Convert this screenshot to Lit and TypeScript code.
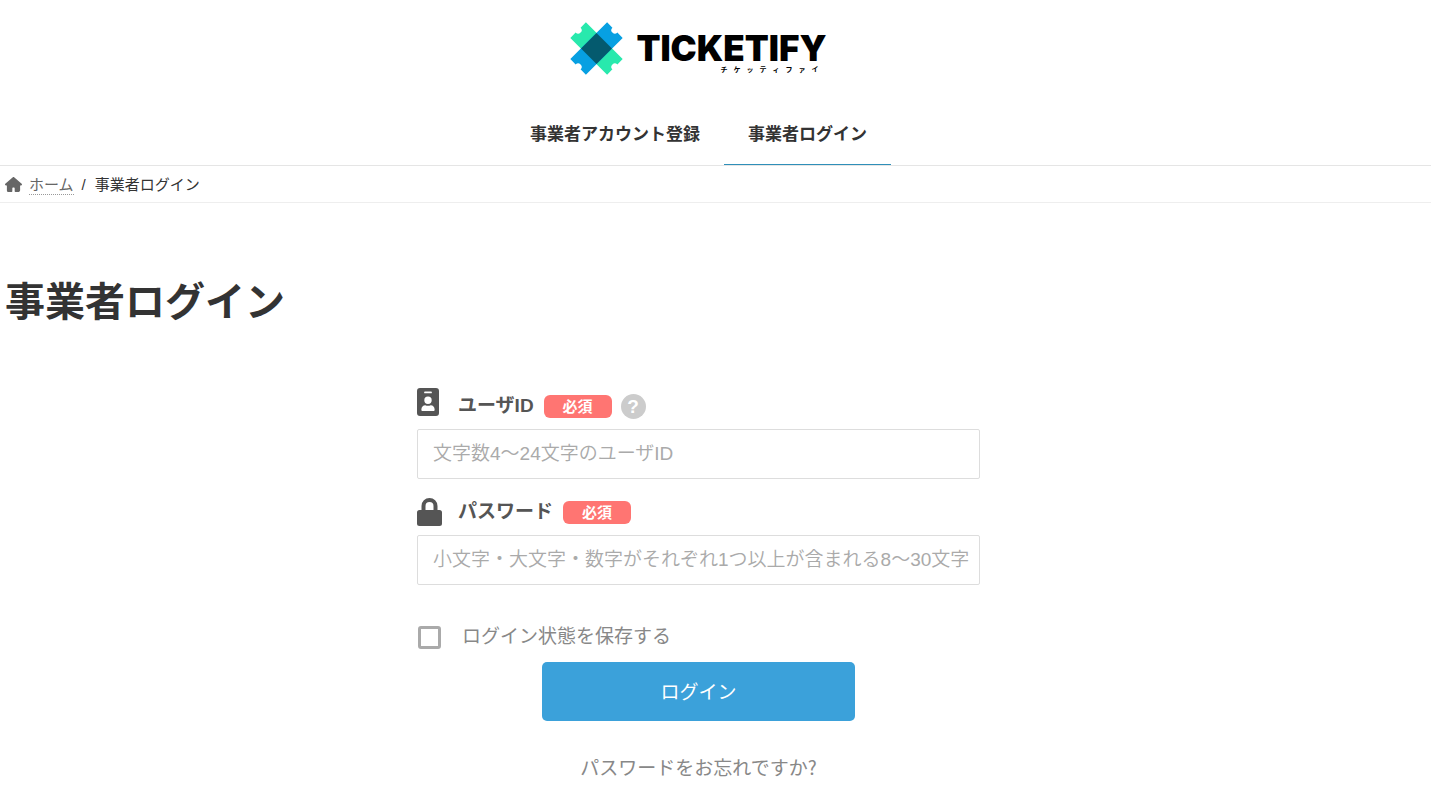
import { LitElement, html, css } from "lit";
import { customElement } from "lit/decorators.js";

@customElement("app-root")
export class AppRoot extends LitElement {
  static styles = css`
    :host {
      display: block;
      background: #fff;
      color: #333;
      font-family: "Liberation Sans", "Noto Sans CJK JP", sans-serif;
    }
    * { box-sizing: border-box; }
    a { color: inherit; text-decoration: none; }
    .inset { padding: 0 39px 0 5px; }
    .header {
      display: flex;
      flex-direction: column;
      align-items: center;
      border-bottom: 1px solid #e5e5e5;
    }
    .logo {
      display: flex;
      align-items: flex-start;
      gap: 13px;
      margin-top: 22px;
      height: 53px;
      color: #000;
    }
    .mark { display: block; width: 53px; height: 53px; }
    .wordmark { display: flex; flex-direction: column; align-items: flex-end; padding-top: 8px; }
    .name { font: 900 35px/36px Inter, sans-serif; }
    .kana {
      display: flex;
      gap: 6px;
      padding-right: 8px;
      font: 700 7px/7px "Noto Sans CJK JP", sans-serif;
    }
    .nav { display: flex; margin-top: 29px; }
    .nav a {
      padding: 2px 24px 0;
      font-size: 17px;
      font-weight: 700;
      line-height: 58px;
      border-bottom: 1px solid transparent;
    }
    .nav a.current { border-bottom-color: #2f8fb9; }
    .crumbs {
      display: flex;
      align-items: center;
      height: 37px;
      padding-top: 2px;
      font-size: 15px;
      line-height: 18px;
      border-bottom: 1px solid #eee;
    }
    .home { width: 17px; height: 15px; margin: 0 7px 2px 0; fill: #666; }
    .crumbs a { color: #666; border-bottom: 1px dotted #999; }
    .slash { margin: 0 9px 0 8px; }
    h1 { margin: 69px 0 0; font-size: 40px; line-height: 60px; font-weight: 700; }
    form {
      display: flex;
      flex-direction: column;
      width: 100%;
      max-width: 563px;
      margin: 53px auto 0;
      font-size: 19px;
    }
    .row { display: flex; align-items: center; height: 44px; padding-bottom: 2px; color: #555; }
    .icon { width: 41px; height: 30px; display: flex; align-items: center; flex: none; }
    .icon.top { align-self: flex-start; margin-top: 2px; }
    .icon svg { height: 28px; fill: #555; display: block; }
    .row label { font-weight: 700; line-height: 28px; }
    .need {
      width: 68px;
      margin-left: 10px;
      border-radius: 6px;
      background: #ff7572;
      color: #fff;
      font-size: 15px;
      line-height: 23px;
      font-weight: 700;
      text-align: center;
    }
    .help {
      width: 25px;
      height: 25px;
      margin: 0 0 0 9px;
      padding: 0;
      border: 0;
      border-radius: 50%;
      background: #ccc;
      color: #fff;
      font: 700 19px/25px "Liberation Sans", sans-serif;
    }
    .field {
      width: 100%;
      height: 50px;
      margin-bottom: 12px;
      padding: 0 8px 0 15px;
      border: 1px solid #ddd;
      border-radius: 2px;
      background: #fff;
      color: #555;
      font: 350 19px "Liberation Sans", "Noto Sans CJK JP", sans-serif;
    }
    .field::placeholder { color: #aaa; opacity: 1; }
    .keep { display: flex; align-items: center; gap: 21px; margin: 26px 0 11px; line-height: 28px; color: #888; }
    .keep input {
      appearance: none;
      width: 23px;
      height: 23px;
      margin: 0 0 0 1px;
      border: 3px solid #aaa;
      border-radius: 3px;
    }
    .keep input:checked { background: #aaa; }
    .submit {
      align-self: center;
      width: 313px;
      height: 59px;
      padding: 0 0 2px;
      border: 0;
      border-radius: 5px;
      background: #3ba1da;
      color: #fff;
      font: 400 19px "Liberation Sans", "Noto Sans CJK JP", sans-serif;
    }
    .forgot {
      align-self: center;
      margin: 32px 0 20px;
      line-height: 28px;
      color: #888;
      font-family: "Noto Sans CJK JP", sans-serif;
    }
  `;

  render() {
    return html`
      <header class="header inset">
        <a class="logo" href="#" aria-label="TICKETIFY">
          <svg class="mark" viewBox="-26.5 -26.5 53 53" aria-hidden="true">
            <path transform="rotate(45)" fill="#28e9ad" d="M-26-11H26V-3.500A3.500 3.500 0 0 0 26 3.500V11H-26V3.500A3.500 3.500 0 0 0-26-3.500Z" />
            <path transform="rotate(-45)" fill="#07a0e2" d="M-26-11H26V-3.500A3.500 3.500 0 0 0 26 3.500V11H-26V3.500A3.500 3.500 0 0 0-26-3.500Z" />
            <path fill="#045a6e" d="M0-15.500 15.500 0 0 15.500-15.500 0Z" />
          </svg>
          <span class="wordmark">
            <span class="name">TICKETIFY</span>
            <span class="kana">${[..."チケッティファイ"].map((c) => html`<span>${c}</span>`)}</span>
          </span>
        </a>
        <nav class="nav">
          <a href="#register">事業者アカウント登録</a>
          <a href="#login" class="current" aria-current="page">事業者ログイン</a>
        </nav>
      </header>
      <nav class="crumbs inset" aria-label="breadcrumb">
        <svg class="home" viewBox="0 0 576 512" preserveAspectRatio="none" aria-hidden="true">
          <path d="M575.800 255.500c0 18-15 32.100-32 32.100h-32l.7 160.200c0 35-20 64.200-48.500 64.200H352c-17 0-24-12-24-24v-96c0-17.700-14.300-32-32-32h-16c-17.700 0-32 14.300-32 32v96c0 12-7 24-24 24H112c-30 0-48-28-48-64V287.600H32c-18 0-32-14-32-32.100 0-9 3-17 10-24L266.400 8c7-7 15-8 22-8s15 2 21 7l255.400 224.500c8 7 12 15 11 24z" />
        </svg>
        <a href="#">ホーム</a><span class="slash">/</span><span>事業者ログイン</span>
      </nav>
      <main class="inset">
        <h1>事業者ログイン</h1>
        <form @submit=${(e: Event) => e.preventDefault()}>
          <div class="row">
            <span class="icon top">
              <svg viewBox="0 0 22 28" width="22" aria-hidden="true">
                <path fill-rule="evenodd" d="M3 0H19A3 3 0 0 1 22 3V25A3 3 0 0 1 19 28H3A3 3 0 0 1 0 25V3A3 3 0 0 1 3 0ZM8 3.500A.9.9 0 0 0 8 5.300H14A.9.9 0 0 0 14 3.500ZM11 8.500A3.700 3.700 0 1 0 11 15.900 3.700 3.700 0 1 0 11 8.500ZM8.300 17.200C6 17.200 4.400 19 4.400 21.200V22C4.400 22.600 4.900 23 5.500 23H16.500C17.100 23 17.600 22.600 17.600 22V21.200C17.600 19 16 17.200 13.700 17.200 12 18 10 18 8.300 17.200Z" />
              </svg>
            </span>
            <label for="user">ユーザID</label>
            <span class="need">必須</span>
            <button class="help" type="button" aria-label="ヘルプ">?</button>
          </div>
          <input class="field" id="user" type="text" placeholder="文字数4～24文字のユーザID" />
          <div class="row">
            <span class="icon">
              <svg viewBox="0 0 25 28" width="25" aria-hidden="true">
                <path fill-rule="evenodd" d="M4.500 12V8A8 8 0 0 1 20.500 8V12H22.500A2.500 2.500 0 0 1 25 14.500V25.500A2.500 2.500 0 0 1 22.500 28H2.500A2.500 2.500 0 0 1 0 25.500V14.500A2.500 2.500 0 0 1 2.500 12ZM8.500 12H16.500V8A4 4 0 0 0 8.500 8Z" />
              </svg>
            </span>
            <label for="pass">パスワード</label>
            <span class="need">必須</span>
          </div>
          <input class="field" id="pass" type="password" placeholder="小文字・大文字・数字がそれぞれ1つ以上が含まれる8～30文字" />
          <label class="keep"><input type="checkbox" />ログイン状態を保存する</label>
          <button class="submit" type="submit">ログイン</button>
          <a class="forgot" href="#forgot">パスワードをお忘れですか?</a>
        </form>
      </main>
    `;
  }
}
